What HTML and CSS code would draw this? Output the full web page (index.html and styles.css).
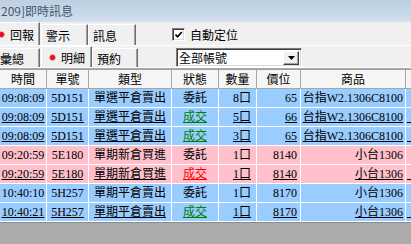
FILE: index.html
```html
<!DOCTYPE html>
<html lang="zh-Hant">
  <head>
    <meta charset="UTF-8" />
    <title>即時訊息</title>
    <link rel="stylesheet" href="styles.css">
  </head>
  <body>
    <div class="window">
      <div class="titlebar">209]即時訊息</div>

      <!-- first tab strip -->
      <div class="strip strip-top">
        <div class="tabs">
          <div class="tab active w1"><span class="dot clip"></span>回報</div>
          <div class="tab w2">警示</div>
          <div class="tab w3">訊息</div>
        </div>
        <label class="check">
          <span class="box">
            <svg width="9" height="9" viewBox="0 0 9 9"><polyline points="1.5,4.5 3.5,6.8 7.8,2" fill="none" stroke="#000" stroke-width="1.7"/></svg>
          </span>
          自動定位
        </label>
      </div>

      <!-- second tab strip -->
      <div class="strip strip-second">
        <div class="tabs">
          <div class="tab w1 plain">彙總</div>
          <div class="tab active w4"><span class="dot"></span>明細</div>
          <div class="tab w5">預約</div>
        </div>
        <div class="select">
          <span class="select-text">全部帳號</span>
          <span class="select-btn">
            <svg width="7" height="4" viewBox="0 0 7 4"><polygon points="0,0 7,0 3.5,4" fill="#000"/></svg>
          </span>
        </div>
      </div>

      <div class="list">
        <div class="row head">
          <div>時間</div><div>單號</div><div>類型</div><div>狀態</div><div>數量</div><div>價位</div><div>商品</div><div></div>
        </div>

        <div class="row blue">
          <div>09:08:09</div><div>5D151</div><div>單選平倉賣出</div><div>委託</div>
          <div class="qty">8口</div><div class="num">65</div><div class="prod">台指W2.1306C8100</div><div></div>
        </div>
        <div class="row blue u">
          <div>09:08:09</div><div>5D151</div><div>單選平倉賣出</div><div class="ok">成交</div>
          <div class="qty">5口</div><div class="num">66</div><div class="prod">台指W2.1306C8100</div><div class="edge">&nbsp;&nbsp;</div>
        </div>
        <div class="row blue u">
          <div>09:08:09</div><div>5D151</div><div>單選平倉賣出</div><div class="ok">成交</div>
          <div class="qty">3口</div><div class="num">65</div><div class="prod">台指W2.1306C8100</div><div class="edge">&nbsp;&nbsp;</div>
        </div>
        <div class="row pink">
          <div>09:20:59</div><div>5E180</div><div>單期新倉買進</div><div>委託</div>
          <div class="qty">1口</div><div class="num">8140</div><div class="prod">小台1306</div><div></div>
        </div>
        <div class="row pink u">
          <div>09:20:59</div><div>5E180</div><div>單期新倉買進</div><div class="ok red">成交</div>
          <div class="qty">1口</div><div class="num">8140</div><div class="prod">小台1306</div><div class="edge">&nbsp;&nbsp;</div>
        </div>
        <div class="row blue">
          <div>10:40:10</div><div>5H257</div><div>單期平倉賣出</div><div>委託</div>
          <div class="qty">1口</div><div class="num">8170</div><div class="prod">小台1306</div><div></div>
        </div>
        <div class="row blue u">
          <div>10:40:21</div><div>5H257</div><div>單期平倉賣出</div><div class="ok">成交</div>
          <div class="qty">1口</div><div class="num">8170</div><div class="prod">小台1306</div><div class="edge">&nbsp;&nbsp;</div>
        </div>
      </div>

      <div class="bottom"></div>
    </div>
  </body>
</html>
```

FILE: styles.css
```css
body {
  margin: 0;
  font-family: "Noto Sans CJK TC", sans-serif;
  font-size: 12px;
  color: #000;
  background: #ababab;
}

.window {
  width: 411px;
  height: 244px;
  overflow: hidden;
  display: flex;
  flex-direction: column;
}

.titlebar {
  height: 22px;
  line-height: 22px;
  padding-left: 1px;
  color: #46566a;
  background: linear-gradient(#bccfe3, #d2dfec);
  white-space: nowrap;
}

/* tab strips */
.strip {
  display: flex;
  align-items: flex-end;
  background: #f0f0f0;
}

.strip-top {
  height: 23px;
  border-bottom: 1px solid #fff;
}

.strip-second {
  height: 21px;
  border-bottom: 1px solid #fff;
}

.tabs {
  display: flex;
  align-items: flex-end;
  height: 100%;
}

.tab {
  box-sizing: border-box;
  height: calc(100% - 2px);
  display: flex;
  align-items: center;
  padding-left: 4px;
  border-top: 1px solid #fff;
  border-left: 1px solid #fff;
  border-right: 1px solid #6e6e6e;
  box-shadow: inset -1px 0 0 #a0a0a0;
  white-space: nowrap;
  overflow: hidden;
}

.tab.active {
  height: 100%;
  background: #f0f0f0;
}

.tab.plain {
  border-left: 0;
  padding-left: 0;
}

.w1 { width: 40px; }
.w2 { width: 47px; margin-left: 1px; }
.w3 { width: 48px; }
.w4 { width: 51px; margin-left: 1px; padding-left: 7px; }
.w5 { width: 46px; }

.strip-top .tab.active {
  border-left: 0;
  padding-left: 0;
}

.dot {
  width: 7px;
  height: 7px;
  margin-right: 5px;
  border-radius: 50%;
  flex: none;
  background: radial-gradient(circle, #e3101c 0 2px, #f07070 2.6px, #fbd0d0 3.5px);
}

.dot.clip {
  margin-left: -2px;
  margin-right: 5px;
}

.check {
  display: flex;
  align-items: center;
  gap: 5px;
  margin-left: 36px;
  align-self: center;
  padding-top: 1px;
}

.box {
  box-sizing: border-box;
  width: 13px;
  height: 13px;
  background: #fff;
  border: 1px solid;
  border-color: #7a7a7a #fff #fff #7a7a7a;
  box-shadow: inset 1px 1px 0 #404040, inset -1px -1px 0 #d8d8d8;
  display: flex;
  align-items: center;
  justify-content: center;
}

.select {
  box-sizing: border-box;
  width: 126px;
  height: 19px;
  margin-left: 38px;
  margin-bottom: 0;
  align-self: flex-end;
  display: flex;
  align-items: center;
  background: #fff;
  border: 1px solid;
  border-color: #7a7a7a #fff #fff #7a7a7a;
  box-shadow: inset 1px 1px 0 #404040, inset -1px -1px 0 #d8d8d8;
  padding: 2px;
}

.select-text {
  flex: 1;
  padding-left: 0;
}

.select-btn {
  box-sizing: border-box;
  width: 16px;
  height: 14px;
  display: flex;
  align-items: center;
  justify-content: center;
  background: #f0f0f0;
  border: 1px solid;
  border-color: #fff #404040 #404040 #fff;
  box-shadow: inset -1px -1px 0 #a0a0a0;
}

/* list view */
.list {
  margin-top: 1px;
  border-top: 1px solid #a0a0a0;
  background: #fff;
  display: flex;
  flex-direction: column;
  gap: 1px;
  border-bottom: 1px solid #fff;
}

.row {
  display: grid;
  grid-template-columns: 46px 41px 82px 46px 37px 43px 104px 30px;
  column-gap: 1px;
  height: 18px;
  line-height: 18px;
  font-family: "Liberation Serif", "Noto Sans CJK TC", serif;
  white-space: nowrap;
}

.row > div {
  text-align: center;
  overflow: hidden;
}

.row.head {
  height: 19px;
  line-height: 18px;
  background: #a6a6a6;
  column-gap: 1px;
  border-bottom: 1px solid #a6a6a6;
  box-sizing: border-box;
  font-family: "Noto Sans CJK TC", sans-serif;
}

.row.head > div {
  background: #f5f5f5;
}

.row.head + .row {
  margin-top: -1px;
}

.blue > div { background: #99ccff; }
.pink > div { background: #ffc0cb; }

.u > div {
  text-decoration: underline;
}

.row > .qty {
  text-align: right;
  padding-right: 5px;
}

.row > .num {
  text-align: right;
  padding-right: 3px;
}

.row > .prod {
  text-align: right;
  padding-right: 2px;
}

.row > .edge {
  text-align: left;
  padding-left: 1px;
}

.ok {
  color: #008000;
}

.ok.red {
  color: #ff0000;
}

.bottom {
  flex: 1;
  background: #ababab;
  border-top: 1px solid #8a8a8a;
}
```
